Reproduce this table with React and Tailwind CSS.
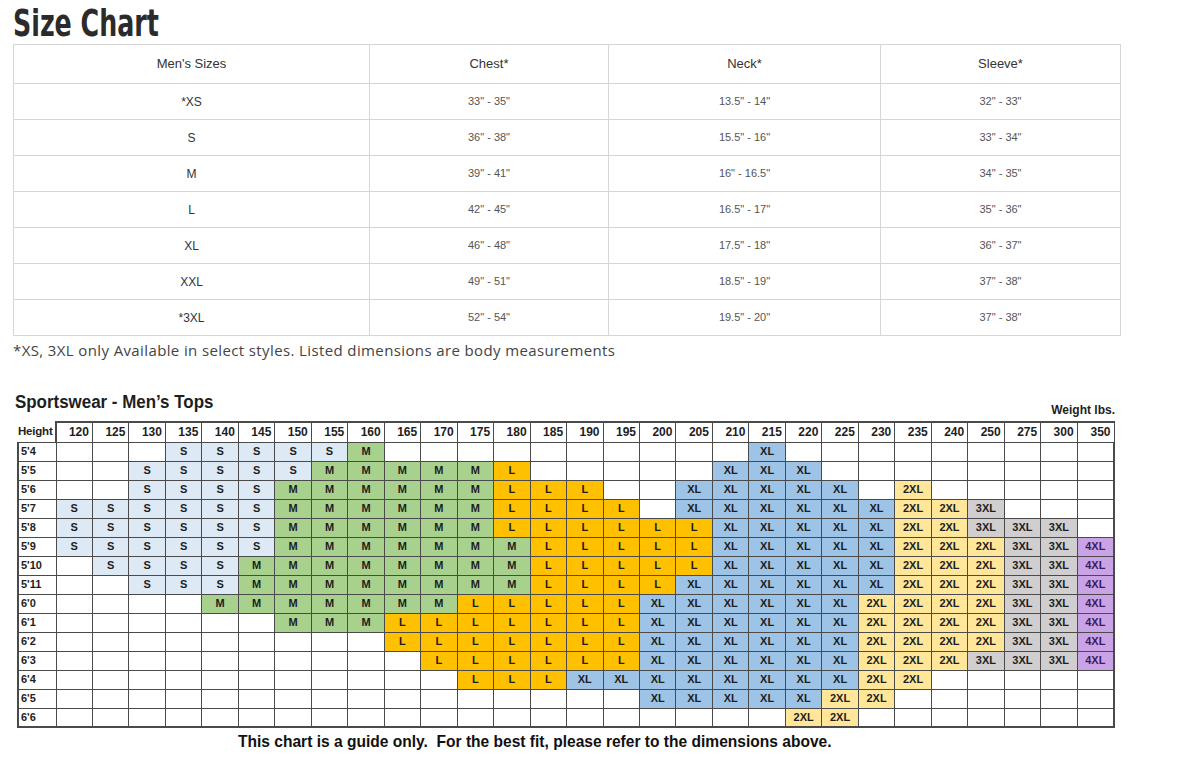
const sizeRows = [
  ['*XS', '33" - 35"', '13.5" - 14"', '32" - 33"'],
  ['S', '36" - 38"', '15.5" - 16"', '33" - 34"'],
  ['M', '39" - 41"', '16" - 16.5"', '34" - 35"'],
  ['L', '42" - 45"', '16.5" - 17"', '35" - 36"'],
  ['XL', '46" - 48"', '17.5" - 18"', '36" - 37"'],
  ['XXL', '49" - 51"', '18.5" - 19"', '37" - 38"'],
  ['*3XL', '52" - 54"', '19.5" - 20"', '37" - 38"'],
];

const weights = [120, 125, 130, 135, 140, 145, 150, 155, 160, 165, 170, 175, 180, 185, 190, 195, 200, 205, 210, 215, 220, 225, 230, 235, 240, 250, 275, 300, 350];

// each row is a list of runs: [size, how many columns]
const chartRows = [
  ["5'4", [['', 3], ['S', 5], ['M', 1], ['', 10], ['XL', 1], ['', 9]]],
  ["5'5", [['', 2], ['S', 5], ['M', 5], ['L', 1], ['', 5], ['XL', 3], ['', 8]]],
  ["5'6", [['', 2], ['S', 4], ['M', 6], ['L', 3], ['', 2], ['XL', 5], ['', 1], ['2XL', 1], ['', 5]]],
  ["5'7", [['S', 6], ['M', 6], ['L', 4], ['', 1], ['XL', 6], ['2XL', 2], ['3XL', 1], ['', 3]]],
  ["5'8", [['S', 6], ['M', 6], ['L', 6], ['XL', 5], ['2XL', 2], ['3XL', 3], ['', 1]]],
  ["5'9", [['S', 6], ['M', 7], ['L', 5], ['XL', 5], ['2XL', 3], ['3XL', 2], ['4XL', 1]]],
  ["5'10", [['', 1], ['S', 4], ['M', 8], ['L', 5], ['XL', 5], ['2XL', 3], ['3XL', 2], ['4XL', 1]]],
  ["5'11", [['', 2], ['S', 3], ['M', 8], ['L', 4], ['XL', 6], ['2XL', 3], ['3XL', 2], ['4XL', 1]]],
  ["6'0", [['', 4], ['M', 7], ['L', 5], ['XL', 6], ['2XL', 4], ['3XL', 2], ['4XL', 1]]],
  ["6'1", [['', 6], ['M', 3], ['L', 7], ['XL', 6], ['2XL', 4], ['3XL', 2], ['4XL', 1]]],
  ["6'2", [['', 9], ['L', 7], ['XL', 6], ['2XL', 4], ['3XL', 2], ['4XL', 1]]],
  ["6'3", [['', 10], ['L', 6], ['XL', 6], ['2XL', 3], ['3XL', 3], ['4XL', 1]]],
  ["6'4", [['', 11], ['L', 3], ['XL', 8], ['2XL', 2], ['', 5]]],
  ["6'5", [['', 16], ['XL', 5], ['2XL', 2], ['', 6]]],
  ["6'6", [['', 20], ['2XL', 2], ['', 7]]],
];

const cellColor = {
  '': 'bg-white',
  S: 'bg-[#dde9f5]',
  M: 'bg-[#a9d18e]',
  L: 'bg-[#ffc000]',
  XL: 'bg-[#9dc3e6]',
  '2XL': 'bg-[#ffe699]',
  '3XL': 'bg-[#d0cece]',
  '4XL': 'bg-[#c9a3e6] text-[#3b1d5e]',
};

const expand = (runs) => runs.flatMap(([size, n]) => Array(n).fill(size));

const SizeTable = () => (
  <table className="w-[1107px] table-fixed border-collapse text-center font-['Liberation_Sans',Arial,sans-serif]">
    <colgroup>
      <col className="w-[356px]" />
      <col className="w-[239px]" />
      <col className="w-[272px]" />
      <col className="w-[240px]" />
    </colgroup>
    <thead>
      <tr className="h-[39px] text-[13px] text-[#333]">
        <th className="border border-[#d6d6d6] font-normal">Men's Sizes</th>
        <th className="border border-[#d6d6d6] font-normal">Chest*</th>
        <th className="border border-[#d6d6d6] font-normal">Neck*</th>
        <th className="border border-[#d6d6d6] font-normal">Sleeve*</th>
      </tr>
    </thead>
    <tbody>
      {sizeRows.map((row) => (
        <tr key={row[0]} className="h-9 text-[11px] text-[#555]">
          {row.map((v, i) => (
            <td key={i} className={`border border-[#d6d6d6] ${i === 0 ? 'text-[12px] text-[#333]' : ''}`}>
              {v}
            </td>
          ))}
        </tr>
      ))}
    </tbody>
  </table>
);

const WeightChart = () => (
  <div className="ml-[4px] w-[1100px] font-['Liberation_Sans',Arial,sans-serif] text-[#1e1e1e]">
    <div className="flex items-end justify-between">
      <h3 className="-ml-[2px] mb-[6px] origin-left scale-x-[0.94] text-[18px] leading-6 font-bold">Sportswear - Men’s Tops</h3>
      <span className="mr-[2px] mb-[1px] text-[12px] font-bold">Weight lbs.</span>
    </div>
    <table className="mt-[1px] w-[1098px] table-fixed border-collapse text-[11px] font-bold">
      <colgroup>
        <col className="w-[38px]" />
        {weights.map((w) => (
          <col key={w} />
        ))}
      </colgroup>
      <thead>
        <tr className="h-5 text-[12px]">
          <th className="border-r-2 border-[#4a4a4a] text-left text-[11.5px] font-bold tracking-[-0.2px]">Height</th>
          {weights.map((w) => (
            <th key={w} className="border-[1.5px] border-t-2 border-[#4a4a4a] pr-[3px] text-right font-bold">
              {w}
            </th>
          ))}
        </tr>
      </thead>
      <tbody>
        {chartRows.map(([h, runs], ri) => (
          <tr key={h} className="h-[19px]">
            <td className={`border-[1.5px] border-l-2 border-[#4a4a4a] pl-[2px] text-left ${ri === chartRows.length - 1 ? 'border-b-2' : ''}`}>
              {h}
            </td>
            {expand(runs).map((s, ci) => (
              <td
                key={ci}
                className={`border-[1.5px] border-[#4a4a4a] text-center leading-none ${cellColor[s]} ${ci === weights.length - 1 ? 'border-r-2' : ''} ${ri === chartRows.length - 1 ? 'border-b-2' : ''}`}
              >
                {s}
              </td>
            ))}
          </tr>
        ))}
      </tbody>
    </table>
    <p className="mt-[4px] ml-[221px] origin-left scale-x-[0.915] text-[17px] leading-5 font-bold whitespace-pre text-[#111]">
      This chart is a guide only.  For the best fit, please refer to the dimensions above.
    </p>
  </div>
);

const App = () => {
  return (
    <div className="min-h-screen w-[1198px] bg-white px-[13px] pt-[2px]">
      <h1 className="origin-left scale-x-[0.74] font-['DejaVu_Sans_Condensed','DejaVu_Sans',sans-serif] text-[38px] leading-[42px] font-bold text-[#2b2b2b]">
        Size Chart
      </h1>
      <SizeTable />
      <p className="mt-[4px] font-['Open_Sans',sans-serif] text-[15px] leading-5 tracking-[0.38px] text-[#444]">
        *XS, 3XL only Available in select styles. Listed dimensions are body measurements
      </p>
      <div className="mt-[30px]">
        <WeightChart />
      </div>
    </div>
  );
};

export default App;
